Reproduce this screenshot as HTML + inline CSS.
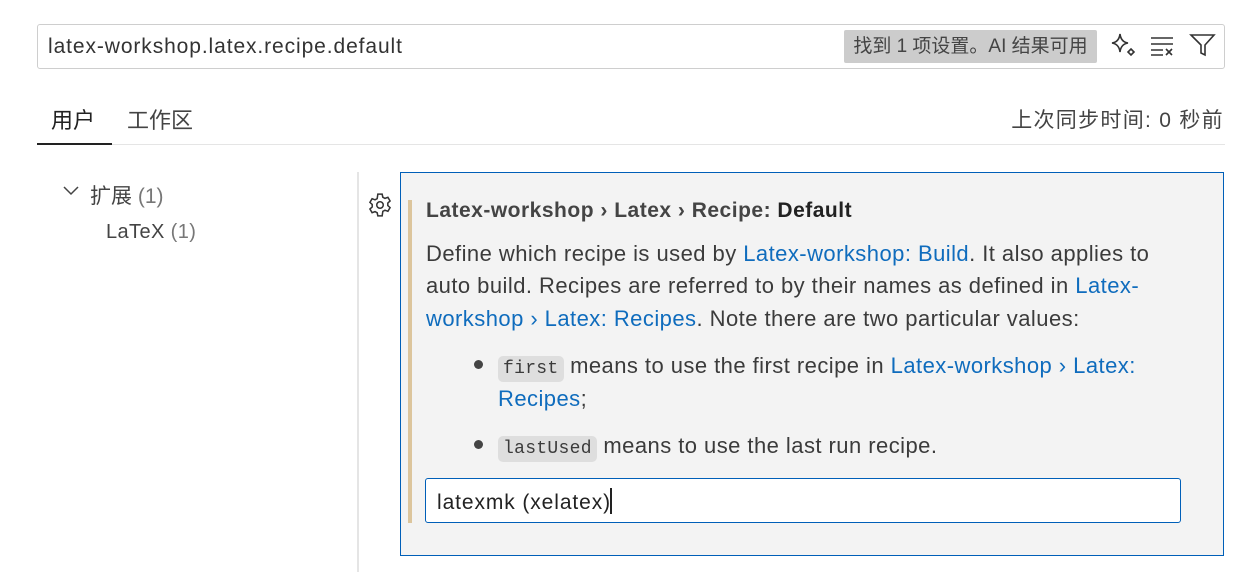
<!DOCTYPE html>
<html><head><meta charset="utf-8"><style>
body{margin:0;width:1242px;height:572px;background:#fff;position:relative;overflow:hidden;font-family:"Liberation Sans","Noto Sans CJK SC",sans-serif;color:#3b3b3b}
.a{position:absolute;white-space:nowrap}
a{color:#0f6cbd;text-decoration:none}
code{font-family:"Liberation Mono","DejaVu Sans Mono",monospace;font-size:18px;letter-spacing:0.3px;background:#dedede;border-radius:5px;padding:3px 5px}
.t{font-size:22px;line-height:33px;letter-spacing:0.45px}
</style></head><body>
<div class="a" style="left:37px;top:24px;width:1186px;height:43px;border:1px solid #cecece;border-radius:3px"></div>
<div class="a" style="left:48px;top:35px;font-size:21px;letter-spacing:0.9px;color:#333">latex-workshop.latex.recipe.default</div>
<div class="a" style="left:844px;top:30px;width:253px;height:33px;background:#cccccc;border-radius:2px;font-size:19px;line-height:33px;text-align:center;color:#444">找到 1 项设置。AI 结果可用</div>
<svg class="a" style="left:1108px;top:31px" width="32" height="30" viewBox="0 0 32 30" fill="none" stroke="#333" stroke-width="1.6"><path d="M12 3 Q13 11 20 12 Q13 13 12 21 Q11 13 4 12 Q11 11 12 3Z"/><path d="M23 18 L26 21 L23 24 L20 21Z"/></svg>
<svg class="a" style="left:1149px;top:34px" width="28" height="24" viewBox="0 0 28 24" stroke="#333" stroke-width="1.6"><path d="M2 4H24M2 10H24M2 16H14M2 21H14M17 15L23 21M23 15L17 21"/></svg>
<svg class="a" style="left:1189px;top:32px" width="28" height="26" viewBox="0 0 28 26" fill="none" stroke="#333" stroke-width="1.6"><path d="M2 3H25L16 13V23L12 21V13Z"/></svg>
<div class="a" style="left:51px;top:103px;font-size:22px;color:#222">用户</div>
<div class="a" style="left:127px;top:103px;font-size:22px;color:#444">工作区</div>
<div class="a" style="left:37px;top:144px;width:1188px;height:1px;background:#e5e5e5"></div>
<div class="a" style="left:37px;top:143px;width:75px;height:2px;background:#222"></div>
<div class="a" style="right:18px;top:104px;font-size:21px;letter-spacing:1.3px;color:#444">上次同步时间: 0 秒前</div>
<svg class="a" style="left:62px;top:184px" width="18" height="14" viewBox="0 0 18 14" fill="none" stroke="#444" stroke-width="1.5"><path d="M2 3L9 10L16 3"/></svg>
<div class="a" style="left:90px;top:180px;font-size:21px;color:#444">扩展 <span style="color:#777">(1)</span></div>
<div class="a" style="left:106px;top:221px;font-size:20px;letter-spacing:0.4px;color:#444">LaTeX <span style="color:#777">(1)</span></div>
<div class="a" style="left:357px;top:172px;width:2px;height:400px;background:#e5e5e5"></div>
<svg class="a" style="left:367px;top:192px" width="26" height="26" viewBox="0 0 24 24" fill="none" stroke="#333" stroke-width="1.4"><circle cx="12" cy="12" r="3"/><path d="M10 2h4l.6 2.8 2 1.1 2.7-1 2 3.4-2.1 1.9v2.3l2.1 1.9-2 3.4-2.7-1-2 1.1L14 22h-4l-.6-2.8-2-1.1-2.7 1-2-3.4 2.1-1.9V11.5L2.7 9.6l2-3.4 2.7 1 2-1.1Z"/></svg>
<div class="a" style="left:400px;top:172px;width:822px;height:382px;background:#f3f3f3;border:1px solid #005fb8"></div>
<div class="a" style="left:408px;top:200px;width:4px;height:323px;background:#dcc59c"></div>
<div class="a" style="left:426px;top:194px;font-size:21px;line-height:33px;letter-spacing:0.5px;color:#444"><b style="font-weight:600">Latex-workshop › Latex › Recipe: </b><b style="color:#222">Default</b></div>
<div class="a t" style="left:426px;top:237px">Define which recipe is used by <a>Latex-workshop: Build</a>. It also applies to</div>
<div class="a t" style="left:426px;top:269px">auto build. Recipes are referred to by their names as defined in <a>Latex-</a></div>
<div class="a t" style="left:426px;top:302px"><a>workshop › Latex: Recipes</a>. Note there are two particular values:</div>
<div class="a" style="left:474px;top:360px;width:9px;height:9px;border-radius:50%;background:#444"></div>
<div class="a t" style="left:498px;top:349px"><code>first</code> means to use the first recipe in <a>Latex-workshop › Latex:</a></div>
<div class="a t" style="left:498px;top:382px"><a>Recipes</a>;</div>
<div class="a" style="left:474px;top:440px;width:9px;height:9px;border-radius:50%;background:#444"></div>
<div class="a t" style="left:498px;top:429px"><code>lastUsed</code> means to use the last run recipe.</div>
<div class="a" style="left:425px;top:478px;width:754px;height:43px;background:#fff;border:1px solid #005fb8;border-radius:3px"></div>
<div class="a" style="left:437px;top:488px;font-size:21px;letter-spacing:0.9px;color:#222">latexmk (xelatex)<span style="display:inline-block;width:2px;height:26px;background:#222;vertical-align:-5px;margin-left:-1px"></span></div>
</body></html>
